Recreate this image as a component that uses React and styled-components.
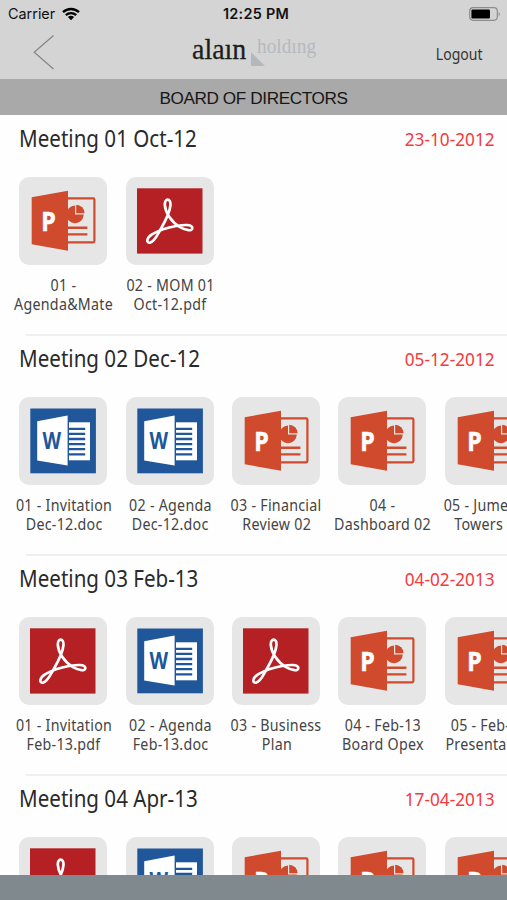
import React from "react";
import styled, { createGlobalStyle } from "styled-components";

const GlobalStyle = createGlobalStyle`
  * {
    box-sizing: border-box;
  }
  body {
    margin: 0;
    background: #fff;
  }
`;

const Screen = styled.div`
  width: 507px;
  height: 900px;
  display: flex;
  flex-direction: column;
  overflow: hidden;
  background: #fefefe;
  font-family: "Noto Sans", "Open Sans", sans-serif;
`;

// keeps the text on one line and narrows it from the given side
const Narrow = styled.span`
  display: block;
  white-space: nowrap;
  transform: scaleX(${(p) => p.$by});
  transform-origin: ${(p) => p.$from || "left"} center;
`;

const StatusBar = styled.div`
  flex: none;
  height: 28px;
  padding: 0 6px 1px 8px;
  display: grid;
  grid-template-columns: 1fr auto 1fr;
  align-items: center;
  background: #d4d4d4;
  font-family: Inter, sans-serif;
  font-size: 14.4px;
  color: #111;
`;

const Carrier = styled.div`
  display: flex;
  align-items: center;
  gap: 7px;
`;

const Clock = styled.div`
  font-weight: 600;
  letter-spacing: 0.3px;
  padding-left: 3px;
`;

const BatteryHolder = styled.div`
  display: flex;
  justify-content: flex-end;
`;

const Header = styled.header`
  flex: none;
  height: 51px;
  padding: 0 25px 0 33px;
  display: grid;
  grid-template-columns: 1fr auto 1fr;
  background: #d4d4d4;
`;

const BackButton = styled.button`
  width: 22px;
  height: 36px;
  margin-top: 6px;
  padding: 0;
  border: 0;
  background: none;
`;

const Logo = styled.div`
  display: flex;
  width: 128px;
  margin-right: 4px;
  font-family: "Liberation Serif", serif;
`;

const LogoMain = styled.div`
  width: 59px;
  padding-top: 4px;
  font-size: 30px;
  line-height: 34px;
  color: #1b1d20;
  -webkit-text-stroke: 0.3px #1b1d20;
`;

const LogoSide = styled.div`
  display: flex;
  width: 69px;
`;

const LogoMark = styled.svg`
  flex: none;
  width: 14px;
  height: 14px;
  margin: 24px -8px 0 0;
`;

const LogoSub = styled.div`
  padding-top: 5px;
  font-size: 21px;
  line-height: 26px;
  color: #b5babe;
`;

const Logout = styled.div`
  text-align: right;
  font-size: 16.5px;
  line-height: 24px;
  padding-top: 14px;
  color: #333;
`;

const TitleBar = styled.h1`
  flex: none;
  height: 36px;
  margin: 0;
  background: #a9a9a9;
  color: #161616;
  font-family: "Liberation Sans", Arial, sans-serif;
  font-size: 17.2px;
  font-weight: 400;
  letter-spacing: -0.4px;
  line-height: 38px;
  text-align: center;
`;

const List = styled.main`
  flex: 1;
  min-height: 0;
  overflow: hidden;
`;

const Section = styled.section`
  height: 220px;
  display: flex;
  flex-direction: column;
`;

const SectionHead = styled.div`
  flex: none;
  height: 62px;
  padding: 0 12px 0 19px;
  display: flex;
  justify-content: space-between;
`;

const SectionTitle = styled.h2`
  margin: 0;
  padding-top: 7px;
  font-size: 23px;
  font-weight: 400;
  line-height: 32px;
  color: #2a2a2a;
`;

const SectionDate = styled.div`
  padding-top: 9px;
  font-size: 18.5px;
  line-height: 30px;
  color: #f5393d;
`;

const Files = styled.div`
  display: grid;
  grid-template-columns: repeat(5, 106.4px);
  padding-left: 10.5px;
  flex: 1;
`;

const File = styled.div`
  display: flex;
  flex-direction: column;
  align-items: center;
`;

const Tile = styled.svg`
  flex: none;
  width: 88px;
  height: 88px;
  margin-right: 1px;
  border-radius: 10px;
  background: #e6e6e6;
`;

const Label = styled.div`
  display: flex;
  flex-direction: column;
  align-items: center;
  margin-top: 11px;
  font-size: 16px;
  line-height: 18.7px;
  letter-spacing: 0.3px;
  color: #444;
`;

const Divider = styled.div`
  flex: none;
  height: 2px;
  margin: 0 0 -1px 26px;
  background: #f0f0f0;
`;

const Footer = styled.footer`
  flex: none;
  height: 25px;
  background: #80898d;
`;

const PptIcon = () => (
  <Tile viewBox="0 0 88 88">
    <rect
      x="40"
      y="21.3"
      width="35.4"
      height="44"
      rx="1.2"
      fill="none"
      stroke="#d04a2d"
      strokeWidth="2.2"
    />
    <path d="M56 28.6V37.6H64.8A8.8 8.8 0 1 1 56 28.6Z" fill="#d04a2d" />
    <path d="M57.2 27.8A8.6 8.6 0 0 1 65.6 36.3H57.2Z" fill="#d04a2d" />
    <path d="M49 50.8H68.4M49 57.4H68.4" stroke="#d04a2d" strokeWidth="2.4" />
    <path d="M12.7 20.3L49 13.7V73.8L12.7 67.3Z" fill="#d04a2d" />
    <text
      transform="translate(22.2 54) scale(.84 1)"
      fontFamily="Open Sans, sans-serif"
      fontWeight="700"
      fontSize="27.5"
      fill="#fff"
      stroke="#fff"
      strokeWidth="0.6"
    >
      P
    </text>
  </Tile>
);

const PdfIcon = () => (
  <Tile viewBox="0 0 88 88">
    <rect x="11" y="11.3" width="65.5" height="65.3" fill="#b52024" />
    <path
      d="M34.5 52.5C38.5 45.5 44 35.5 44.5 27.8C44.9 20.8 38.5 20.8 38.8 27.8C39.2 35.5 45 44.8 54 50.2C60 53.6 66.3 54.5 66.3 51C66.2 46.8 57 47.9 50 49C43 50.2 32.5 53.5 26 57.3C20 61.2 20.3 66.2 24 65.7C28.2 65 31 58.6 34.5 52.5Z"
      fill="none"
      stroke="#fff"
      strokeWidth="2.7"
      strokeLinejoin="round"
    />
  </Tile>
);

const DocIcon = () => (
  <Tile viewBox="0 0 88 88">
    <rect x="11.3" y="11.5" width="65.6" height="64.8" fill="#20569a" />
    <path d="M18.2 24.2L48.6 18.4V68.6L18.2 63.4Z" fill="#fff" />
    <rect x="50" y="25.3" width="21" height="38" fill="#fff" />
    <path
      d="M50 31.8H66.2M50 36.9H66.2M50 42H66.2M50 47.1H66.2M50 52.2H66.2M50 57.3H66.2"
      stroke="#20569a"
      strokeWidth="2.3"
    />
    <text
      transform="translate(23.6 52.3) scale(.8 1)"
      fontFamily="Open Sans, sans-serif"
      fontWeight="700"
      fontSize="24"
      fill="#20569a"
    >
      W
    </text>
  </Tile>
);

const icons = { ppt: PptIcon, pdf: PdfIcon, doc: DocIcon };

const meetings = [
  {
    title: "Meeting 01 Oct-12",
    date: "23-10-2012",
    files: [
      { type: "ppt", lines: ["01 -", "Agenda&Mate"] },
      { type: "pdf", lines: ["02 - MOM 01", "Oct-12.pdf"] },
    ],
  },
  {
    title: "Meeting 02 Dec-12",
    date: "05-12-2012",
    files: [
      { type: "doc", lines: ["01 - Invitation", "Dec-12.doc"] },
      { type: "doc", lines: ["02 - Agenda", "Dec-12.doc"] },
      { type: "ppt", lines: ["03 - Financial", "Review 02"] },
      { type: "ppt", lines: ["04 -", "Dashboard 02"] },
      { type: "ppt", lines: ["05 - Jumeirah", "Towers 02"] },
    ],
  },
  {
    title: "Meeting 03 Feb-13",
    date: "04-02-2013",
    files: [
      { type: "pdf", lines: ["01 - Invitation", "Feb-13.pdf"] },
      { type: "doc", lines: ["02 - Agenda", "Feb-13.doc"] },
      { type: "pdf", lines: ["03 - Business", "Plan"] },
      { type: "ppt", lines: ["04 - Feb-13", "Board Opex"] },
      { type: "ppt", lines: ["05 - Feb-13", "Presentation"] },
    ],
  },
  {
    title: "Meeting 04 Apr-13",
    date: "17-04-2013",
    files: [
      { type: "pdf", lines: [] },
      { type: "doc", lines: [] },
      { type: "ppt", lines: [] },
      { type: "ppt", lines: [] },
      { type: "ppt", lines: [] },
    ],
  },
];

const App = () => {
  return (
    <Screen>
      <GlobalStyle />
      <StatusBar>
        <Carrier>
          <span>Carrier</span>
          <svg width="18" height="14" viewBox="0 0 18 14" fill="none">
            <path
              d="M1 5.2A11.6 11.6 0 0 1 17 5.2M3.8 8.1A7.6 7.6 0 0 1 14.2 8.1"
              stroke="#000"
              strokeWidth="2.3"
            />
            <path d="M9 13.2L5.9 10.1A4.5 4.5 0 0 1 12.1 10.1Z" fill="#000" />
          </svg>
        </Carrier>
        <Clock>12:25 PM</Clock>
        <BatteryHolder>
          <svg width="32" height="14" viewBox="0 0 32 14">
            <rect
              x="0.7"
              y="0.7"
              width="27.6"
              height="12.6"
              rx="3.5"
              fill="none"
              stroke="#8c8c8c"
              strokeWidth="1.2"
            />
            <rect x="2.4" y="2.4" width="18.6" height="9.2" rx="1.3" fill="#000" />
            <path d="M29.7 4.7Q32 7 29.7 9.3Z" fill="#8c8c8c" />
          </svg>
        </BatteryHolder>
      </StatusBar>
      <Header>
        <BackButton aria-label="Back">
          <svg width="22" height="36" viewBox="0 0 22 36">
            <path
              d="M20.5 1.5L1.2 18.3L20.5 35"
              fill="none"
              stroke="#858585"
              strokeWidth="1.2"
            />
          </svg>
        </BackButton>
        <Logo>
          <LogoMain>
            <Narrow $by={0.93}>alaın</Narrow>
          </LogoMain>
          <LogoSide>
            <LogoMark viewBox="0 0 14 14">
              <path d="M0 0L14 14H0Z" fill="#b3b8bd" />
            </LogoMark>
            <LogoSub>
              <Narrow $by={0.92}>holdıng</Narrow>
            </LogoSub>
          </LogoSide>
        </Logo>
        <Logout>
          <Narrow $by={0.85} $from="right">
            Logout
          </Narrow>
        </Logout>
      </Header>
      <TitleBar>BOARD OF DIRECTORS</TitleBar>
      <List>
        {meetings.map((m) => (
          <Section key={m.title}>
            <SectionHead>
              <SectionTitle>
                <Narrow $by={0.895}>{m.title}</Narrow>
              </SectionTitle>
              <SectionDate>
                <Narrow $by={0.93} $from="right">
                  {m.date}
                </Narrow>
              </SectionDate>
            </SectionHead>
            <Files>
              {m.files.map((f, i) => {
                const Icon = icons[f.type];
                return (
                  <File key={i}>
                    <Icon />
                    <Label>
                      {f.lines.map((line) => (
                        <Narrow key={line} $by={0.89} $from="center">
                          {line}
                        </Narrow>
                      ))}
                    </Label>
                  </File>
                );
              })}
            </Files>
            <Divider />
          </Section>
        ))}
      </List>
      <Footer />
    </Screen>
  );
};

export default App;
